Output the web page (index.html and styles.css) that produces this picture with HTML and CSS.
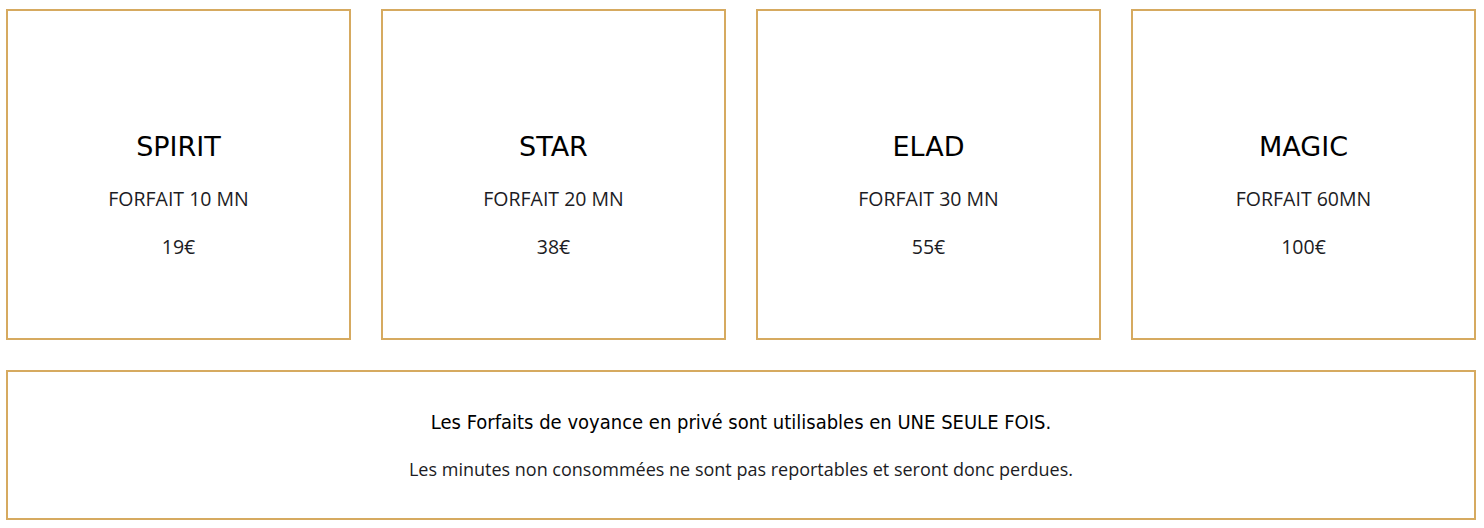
FILE: index.html
```html
<!DOCTYPE html>
<html lang="fr">
<head>
<meta charset="utf-8">
<title>Forfaits</title>
<link rel="stylesheet" href="styles.css">
</head>
<body>
<div class="page">
  <div class="cards">
    <div class="card">
      <h2 class="card-title">SPIRIT</h2>
      <p class="card-sub">FORFAIT 10 MN</p>
      <p class="card-price">19€</p>
    </div>
    <div class="card">
      <h2 class="card-title">STAR</h2>
      <p class="card-sub">FORFAIT 20 MN</p>
      <p class="card-price">38€</p>
    </div>
    <div class="card">
      <h2 class="card-title">ELAD</h2>
      <p class="card-sub">FORFAIT 30 MN</p>
      <p class="card-price">55€</p>
    </div>
    <div class="card">
      <h2 class="card-title">MAGIC</h2>
      <p class="card-sub">FORFAIT 60MN</p>
      <p class="card-price">100€</p>
    </div>
  </div>
  <div class="notice">
    <p class="notice-main">Les Forfaits de voyance en privé sont utilisables en UNE SEULE FOIS.</p>
    <p class="notice-sub">Les minutes non consommées ne sont pas reportables et seront donc perdues.</p>
  </div>
</div>
</body>
</html>
```
FILE: styles.css
```css
html, body {
  margin: 0;
  padding: 0;
  background: #ffffff;
}
body {
  font-family: "Open Sans", sans-serif;
  color: #111;
}
.page {
  padding: 9px 8px 0 6px;
}
.cards {
  display: grid;
  grid-template-columns: repeat(4, 345px);
  column-gap: 30px;
}
.card {
  box-sizing: border-box;
  height: 331px;
  border: 2px solid #d6aa60;
  display: flex;
  flex-direction: column;
  align-items: center;
  padding-top: 120px;
}
.card-title {
  margin: 0;
  font-family: "DejaVu Sans", sans-serif;
  font-weight: normal;
  font-size: 27px;
  line-height: 32px;
  color: #000;
}
.card-sub {
  margin: 22px 0 0;
  font-size: 19.5px;
  line-height: 28px;
  color: #1c1c24;
}
.card-price {
  margin: 20px 0 0;
  font-size: 19.5px;
  line-height: 28px;
  color: #1c1c24;
}
.notice {
  box-sizing: border-box;
  margin-top: 30px;
  width: 1470px;
  height: 150px;
  border: 2px solid #d6aa60;
  display: flex;
  flex-direction: column;
  align-items: center;
  padding-top: 37px;
}
.notice-main {
  margin: 0;
  font-family: "DejaVu Sans Condensed", "DejaVu Sans", sans-serif;
  font-size: 20px;
  line-height: 26px;
  color: #000;
}
.notice-sub {
  margin: 22px 0 0;
  font-size: 18px;
  line-height: 24px;
  color: #1c1c24;
}
```
